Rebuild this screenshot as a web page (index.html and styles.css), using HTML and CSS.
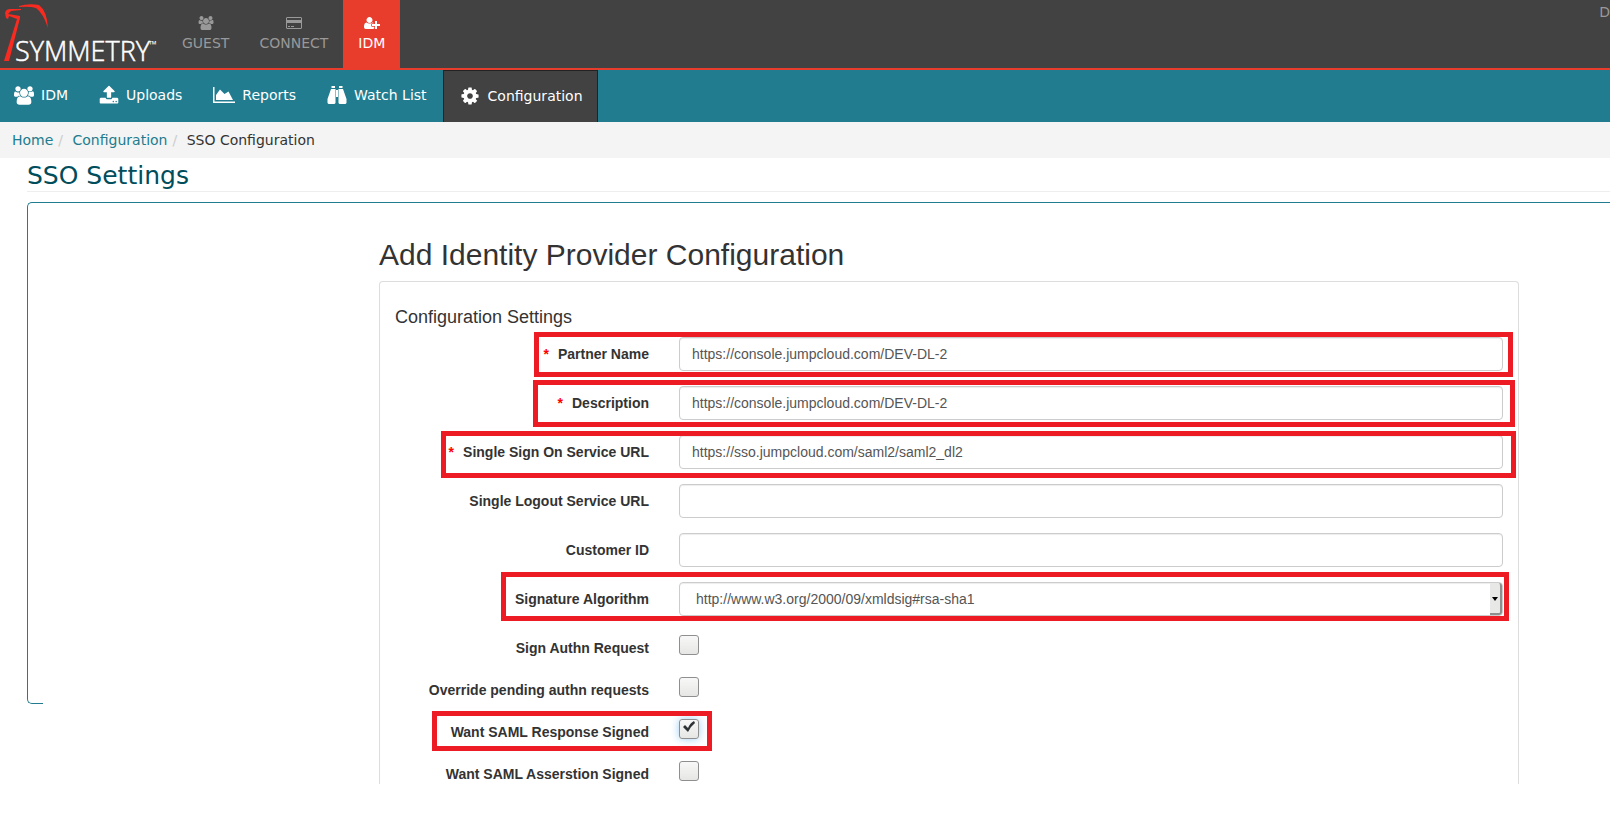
FILE: index.html
```html
<!DOCTYPE html>
<html lang="en">
<head>
    <meta charset="UTF-8">
    <meta name="viewport" content="width=device-width, initial-scale=1.0">
    <title>SSO Configuration - Symmetry</title>
    <link rel="stylesheet" href="styles.css">
</head>
<body>
    <svg class="sprite" aria-hidden="true">
        <symbol id="icon-users" viewBox="0 0 1920 1792">
            <path d="M593 896q-162 5-265 128h-134q-82 0-138-40.5t-56-118.5q0-353 124-353 6 0 43.5 21t97.5 42.5 119 21.5q67 0 133-23-5 37-5 66 0 159 90 287zm1071 637q0 120-73 189.5t-194 69.5h-874q-121 0-194-69.5t-73-189.5q0-53 3.5-103.5t14-109 26.5-108.5 43-97.5 62-81 85.5-53.5 111.5-20q10 0 43 21.5t73 48 107 48 135 21.5 135-21.5 107-48 73-48 43-21.5q61 0 111.5 20t85.5 53.5 62 81 43 97.5 26.5 108.5 14 109 3.5 103.5zm-1024-1277q0 106-75 181t-181 75-181-75-75-181 75-181 181-75 181 75 75 181zm704 384q0 159-112.5 271.5t-271.5 112.5-271.5-112.5-112.5-271.5 112.5-271.5 271.5-112.5 271.5 112.5 112.5 271.5zm576 225q0 78-56 118.5t-138 40.5h-134q-103-123-265-128 90-128 90-287 0-29-5-66 66 23 133 23 59 0 119-21.5t97.5-42.5 43.5-21q124 0 124 353zm-128-609q0 106-75 181t-181 75-181-75-75-181 75-181 181-75 181 75 75 181z"/>
        </symbol>
    </svg>

    <header class="topbar">
        <a class="logo" href="#" aria-label="Symmetry">
            <svg width="167" height="68" viewBox="0 0 167 68">
                <path fill="#f92b20" d="M4 61 17 19 9 16 8 19 6 18 5 13Q6 9 10 9L21 9 21 10 11 11 8 14 20 16 20 18 9 61zM19 6Q29 3 39 5Q47 11 48 28Q43 13 36 8Q30 6 19 7z"/>
                <text class="logo-text" x="15" y="61">SYMMETRY</text>
                <text class="logo-tm" x="149" y="48">™</text>
            </svg>
        </a>
        <nav class="main-nav">
            <a href="#">
                <svg class="icon" width="16" height="14"><use href="#icon-users"/></svg>
                GUEST
            </a>
            <a href="#">
                <svg class="icon" width="16" height="14" viewBox="0 0 16 14"><path fill-rule="evenodd" d="M1 1h14l1 1v10l-1 1H1l-1-1V2zm0 1v2h14V2zm0 5v5h14V7zm1 3h2v1H2zm3 0h3v1H5z"/></svg>
                CONNECT
            </a>
            <a class="active" href="#">
                <svg class="icon" width="16" height="14" viewBox="0 0 2048 1792"><path d="M704 896q-159 0-271.500-112.500t-112.500-271.500 112.500-271.500 271.500-112.500 271.500 112.500 112.500 271.500-112.500 271.500-271.500 112.500zm960 128h352q13 0 22.500 9.500t9.500 22.500v192q0 13-9.500 22.500t-22.500 9.500h-352v352q0 13-9.500 22.500t-22.500 9.500h-192q-13 0-22.500-9.500t-9.500-22.500v-352h-352q-13 0-22.500-9.500t-9.500-22.500v-192q0-13 9.500-22.500t22.500-9.500h352v-352q0-13 9.500-22.500t22.500-9.500h192q13 0 22.500 9.500t9.500 22.500v352zm-736 224q0 52 38 90t90 38h256v238q-68 50-171 50h-874q-121 0-194-69t-73-190q0-53 3.500-103.500t14-109 26.500-108.500 43-97.500 62-81 85.500-53.500 111.500-20q19 0 39 17 79 61 154.500 91.500t164.500 30.500 164.500-30.500 154.500-91.500q20-17 39-17 132 0 217 96h-223q-52 0-90 38t-38 90v192z"/></svg>
                IDM
            </a>
        </nav>
        <a class="user-link" href="#">D</a>
    </header>

    <nav class="sub-nav">
        <a href="#">
            <svg class="icon" width="20" height="19"><use href="#icon-users"/></svg>
            IDM
        </a>
        <a href="#">
            <svg class="icon" width="20" height="20" viewBox="0 0 1792 1792"><path d="M1344 1472q0-26-19-45t-45-19-45 19-19 45 19 45 45 19 45-19 19-45zm256 0q0-26-19-45t-45-19-45 19-19 45 19 45 45 19 45-19 19-45zm128-224v320q0 40-28 68t-68 28h-1472q-40 0-68-28t-28-68v-320q0-40 28-68t68-28h427q21 56 70.500 92t110.500 36h256q61 0 110.500-36t70.500-92h427q40 0 68 28t28 68zm-325-648q-17 40-59 40h-256v448q0 26-19 45t-45 19h-256q-26 0-45-19t-19-45v-448h-256q-42 0-59-40-17-39 14-69l448-448q18-19 45-19t45 19l448 448q31 30 14 69z"/></svg>
            Uploads
        </a>
        <a href="#">
            <svg class="icon" width="22" height="20" viewBox="0 0 22 20"><path d="M0 2h1.500v14.500H22V18H0zM3 15V10L7 4.500 11.500 9 15.500 6.500 20 15z"/></svg>
            Reports
        </a>
        <a href="#">
            <svg class="icon" width="20" height="20" viewBox="0 0 20 20"><path d="M4.500 1H8v2H4.500zM12 1h3.500v2H12zM4 4h4.500v14l-1 1H1.500l-1-1V14zM11.500 4H16l3.500 10v4l-1 1h-6l-1-1zM9 5h2v7H9z"/></svg>
            Watch List
        </a>
        <a class="active" href="#">
            <svg class="icon" width="20" height="20" viewBox="0 0 1792 1792"><path d="M1152 896q0-106-75-181t-181-75-181 75-75 181 75 181 181 75 181-75 75-181zm512-109v222q0 12-8 23t-20 13l-185 28q-19 54-39 91 35 50 107 138 10 12 10 25t-9 23q-27 37-99 108t-94 71q-12 0-26-9l-138-108q-44 23-91 38-16 136-29 186-7 28-36 28h-222q-14 0-24.500-8.500t-11.500-21.500l-28-184q-49-16-90-37l-141 107q-10 9-25 9-14 0-25-11-126-114-165-168-7-10-7-23 0-12 8-23 15-21 51-66.500t54-70.500q-27-50-41-99l-183-27q-13-2-21-12.500t-8-23.500v-222q0-12 8-23t19-13l186-28q14-46 39-92-40-57-107-138-10-12-10-24 0-10 9-23 26-36 98.500-107.500t94.500-71.500q13 0 26 10l138 107q44-23 91-38 16-136 29-186 7-28 36-28h222q14 0 24.500 8.500t11.500 21.500l28 184q49 16 90 37l142-107q9-9 24-9 13 0 25 10 129 119 165 170 7 8 7 22 0 12-8 23-15 21-51 66.500t-54 70.500q26 50 41 98l183 28q13 2 21 12.500t8 23.500z"/></svg>
            Configuration
        </a>
    </nav>

    <ol class="breadcrumb">
        <li><a href="#">Home</a></li>
        <li><a href="#">Configuration</a></li>
        <li>SSO Configuration</li>
    </ol>

    <main>
        <h1>SSO Settings</h1>
        <div class="settings-box">
            <div class="settings-content">
                <h2>Add Identity Provider Configuration</h2>
                <form class="panel">
                    <h3>Configuration Settings</h3>

                    <div class="form-group">
                        <label for="partnerName"><span class="required">*</span>Partner Name</label>
                        <div class="field"><input type="text" id="partnerName" value="https://console.jumpcloud.com/DEV-DL-2"></div>
                        <span class="highlight highlight-partner"></span>
                    </div>
                    <div class="form-group">
                        <label for="description"><span class="required">*</span>Description</label>
                        <div class="field"><input type="text" id="description" value="https://console.jumpcloud.com/DEV-DL-2"></div>
                        <span class="highlight highlight-description"></span>
                    </div>
                    <div class="form-group">
                        <label for="ssoUrl"><span class="required">*</span>Single Sign On Service URL</label>
                        <div class="field"><input type="text" id="ssoUrl" value="https://sso.jumpcloud.com/saml2/saml2_dl2"></div>
                        <span class="highlight highlight-sso"></span>
                    </div>
                    <div class="form-group">
                        <label for="logoutUrl">Single Logout Service URL</label>
                        <div class="field"><input type="text" id="logoutUrl"></div>
                    </div>
                    <div class="form-group">
                        <label for="customerId">Customer ID</label>
                        <div class="field"><input type="text" id="customerId"></div>
                    </div>
                    <div class="form-group">
                        <label for="algorithm">Signature Algorithm</label>
                        <div class="field">
                            <select id="algorithm">
                                <option>http://www.w3.org/2000/09/xmldsig#rsa-sha1</option>
                            </select>
                            <span class="select-arrow"></span>
                        </div>
                        <span class="highlight highlight-algorithm"></span>
                    </div>
                    <div class="form-group check-group">
                        <label for="signAuthn">Sign Authn Request</label>
                        <div class="field"><input type="checkbox" id="signAuthn"></div>
                    </div>
                    <div class="form-group check-group">
                        <label for="overridePending">Override pending authn requests</label>
                        <div class="field"><input type="checkbox" id="overridePending"></div>
                    </div>
                    <div class="form-group check-group">
                        <label for="responseSigned">Want SAML Response Signed</label>
                        <div class="field">
                            <input type="checkbox" id="responseSigned" checked>
                            <svg class="check-mark" width="14" height="12" viewBox="0 0 14 12"><path d="M1 6 3 4 6 7Q8 2 12 0L13 2Q9 5 6 11z"/></svg>
                        </div>
                        <span class="highlight highlight-response"></span>
                    </div>
                    <div class="form-group check-group">
                        <label for="assertionSigned">Want SAML Asserstion Signed</label>
                        <div class="field"><input type="checkbox" id="assertionSigned"></div>
                    </div>
                </form>
            </div>
        </div>
    </main>
</body>
</html>
```
FILE: styles.css
```css
* {
    box-sizing: border-box;
}

body {
    margin: 0;
    min-height: 100vh;
    font-family: "DejaVu Sans", sans-serif;
    font-size: 14px;
    line-height: 20px;
    color: #333;
    background-color: #fff;
}

a {
    color: #217c8f;
    text-decoration: none;
}

.sprite {
    display: none;
}

.icon {
    fill: currentColor;
    flex: none;
}

/* Header */
.topbar {
    display: flex;
    height: 70px;
    background-color: #424242;
    border-bottom: 2px solid #e83d2d;
}

.logo svg {
    display: block;
}

.logo-text {
    font-family: "Open Sans", sans-serif;
    font-size: 27px;
    font-weight: 300;
    fill: #fff;
    stroke: #fff;
    stroke-width: 0.5;
}

.logo-tm {
    font-family: "Open Sans", sans-serif;
    font-size: 10px;
    fill: #fff;
}

.main-nav {
    display: flex;
}

.main-nav a {
    display: flex;
    flex-direction: column;
    align-items: center;
    gap: 3px;
    padding: 16px 15px 0;
    color: #999;
}

.main-nav a.active {
    background-color: #e83d2d;
    color: #fff;
}

.user-link {
    margin-left: auto;
    padding-top: 2px;
    color: #999;
}

.sub-nav {
    display: flex;
    height: 52px;
    background-color: #217c8f;
}

.sub-nav a {
    display: flex;
    align-items: center;
    gap: 7px;
    padding: 0 16px 2px 15px;
    color: #fff;
}

.sub-nav a:first-child {
    padding-left: 14px;
}

.sub-nav a.active {
    gap: 8px;
    padding: 0 14px 2px 16px;
    background-color: #424242;
    border: 1px solid #222;
    border-bottom: 0;
}

.breadcrumb {
    display: flex;
    margin: 0;
    padding: 8px 12px;
    list-style: none;
    background-color: #f4f4f4;
}

.breadcrumb li + li::before {
    content: "/\00a0";
    padding: 0 5px;
    color: #ccc;
}

/* Page */
main {
    padding: 0 0 110px 27px;
}

h1 {
    margin: 0 0 10px;
    padding-top: 3px;
    font-size: 25px;
    line-height: 30px;
    font-weight: normal;
    color: #004d5c;
    border-bottom: 1px solid #eee;
}

.settings-box {
    padding-left: 15px;
    border: 1px solid #217c8f;
    border-right: 0;
    border-radius: 5px 0 0 5px;
}

/* the form runs on below the frame */
.settings-content {
    position: relative;
    margin-bottom: -81px;
    padding: 35px 91px 0 336px;
    background-color: #fff;
    font-family: "Liberation Sans", Arial, sans-serif;
}

h2 {
    margin: 0 0 10px;
    font-size: 30px;
    line-height: 33px;
    font-weight: normal;
}

.panel {
    padding: 25px 15px 0;
    border: 1px solid #ddd;
    border-bottom: 0;
    border-radius: 4px 4px 0 0;
}

h3 {
    margin: 0 0 10px;
    font-size: 18px;
    line-height: 20px;
    font-weight: normal;
}

.form-group {
    position: relative;
    display: flex;
    height: 34px;
    margin: 0 -16px 15px;
}

.form-group label {
    width: 25%;
    padding: 7px 15px 0 0;
    text-align: right;
    font-weight: bold;
}

.required {
    margin-right: 9px;
    color: #f00;
}

.field {
    position: relative;
    flex: 1;
    padding: 0 16px 0 15px;
}

.check-group {
    height: 27px;
}

.check-group:last-child {
    margin-bottom: 0;
}

input[type="text"],
select {
    display: block;
    width: 100%;
    height: 34px;
    padding: 6px 12px;
    font-family: inherit;
    font-size: 14px;
    line-height: 20px;
    color: #555;
    background-color: #fff;
    border: 1px solid #ccc;
    border-radius: 4px;
    box-shadow: inset 0 1px 1px rgba(0, 0, 0, 0.075);
}

select {
    padding-left: 16px;
    appearance: none;
}

.select-arrow {
    position: absolute;
    top: 1px;
    right: 17px;
    width: 12px;
    height: 32px;
    background-color: #e8e8e7;
    border: solid #8e8e8e;
    border-width: 0 2px 2px 0;
    border-radius: 0 3px 3px 0;
    pointer-events: none;
}

.select-arrow::after {
    content: "";
    position: absolute;
    top: 14px;
    left: 2px;
    border: solid transparent;
    border-width: 4px 3px 0;
    border-top-color: #000;
}

input[type="checkbox"] {
    display: block;
    width: 20px;
    height: 20px;
    margin: 4px 0 0;
    appearance: none;
    background-image: linear-gradient(#f8f8f8, #e6e6e4);
    border: 1px solid #8e8f8f;
    border-radius: 3px;
}

input[type="checkbox"]:checked {
    box-shadow: 0 0 8px #9ccff5;
}

.check-mark {
    position: absolute;
    top: 6px;
    left: 18px;
    fill: #2e3436;
    pointer-events: none;
}

/* Red frames around the fields to fill in */
.highlight {
    position: absolute;
    top: -6px;
    right: 3px;
    height: 47px;
    border: 5px solid #ed1c24;
    pointer-events: none;
}

.highlight-partner {
    top: -5px;
    left: 155px;
    right: 6px;
    height: 45px;
}

.highlight-description {
    left: 154px;
    right: 4px;
}

.highlight-sso {
    top: -4px;
    left: 62px;
}

.highlight-algorithm {
    top: -10px;
    left: 122px;
    right: 10px;
    height: 49px;
}

.highlight-response {
    top: -4px;
    left: 53px;
    right: auto;
    width: 280px;
    height: 40px;
}
```
